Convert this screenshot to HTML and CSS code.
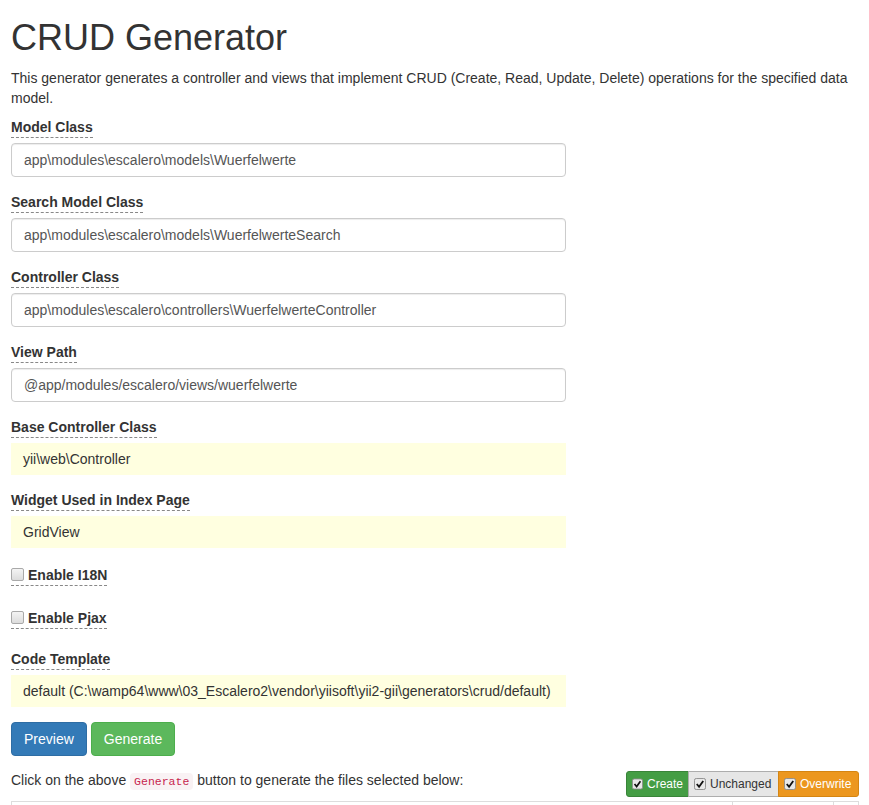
FILE: index.html
```html
<!DOCTYPE html>
<html>
<head>
<meta charset="utf-8">
<title>CRUD Generator</title>
<link rel="stylesheet" href="styles.css">
</head>
<body>
<div class="page">
  <h1 class="title">CRUD Generator</h1>
  <p class="lead-text">This generator generates a controller and views that implement CRUD (Create, Read, Update, Delete) operations for the specified data model.</p>

  <form class="gen-form">
    <div class="form-group">
      <label class="help">Model Class</label>
      <div class="field">app\modules\escalero\models\Wuerfelwerte</div>
    </div>
    <div class="form-group">
      <label class="help">Search Model Class</label>
      <div class="field">app\modules\escalero\models\WuerfelwerteSearch</div>
    </div>
    <div class="form-group">
      <label class="help">Controller Class</label>
      <div class="field">app\modules\escalero\controllers\WuerfelwerteController</div>
    </div>
    <div class="form-group">
      <label class="help">View Path</label>
      <div class="field">@app/modules/escalero/views/wuerfelwerte</div>
    </div>
    <div class="form-group">
      <label class="help">Base Controller Class</label>
      <div class="sticky">yii\web\Controller</div>
    </div>
    <div class="form-group">
      <label class="help">Widget Used in Index Page</label>
      <div class="sticky">GridView</div>
    </div>
    <div class="form-group">
      <div class="checkbox"><label class="help"><span class="cb"></span>Enable I18N</label></div>
    </div>
    <div class="form-group">
      <div class="checkbox"><label class="help"><span class="cb"></span>Enable Pjax</label></div>
    </div>
    <div class="form-group">
      <label class="help">Code Template</label>
      <div class="sticky">default (C:\wamp64\www\03_Escalero2\vendor\yiisoft\yii2-gii\generators\crud/default)</div>
    </div>
    <div class="buttons">
      <button type="button" class="btn btn-primary">Preview</button>
      <button type="button" class="btn btn-success">Generate</button>
    </div>
  </form>

  <div class="files-bar">
    <p class="files-note">Click on the above <code>Generate</code> button to generate the files selected below:</p>
    <div class="toggle-group">
      <span class="tg tg-create"><svg class="tick" viewBox="0 0 13 13"><rect x="0.5" y="0.5" width="12" height="12" rx="2" fill="#e8e8e8" stroke="#8a8a8a"/><path d="M3 6.5 L5.5 9.5 L10 3.2" fill="none" stroke="#111" stroke-width="2"/></svg>Create</span>
      <span class="tg tg-unchanged"><svg class="tick" viewBox="0 0 13 13"><rect x="0.5" y="0.5" width="12" height="12" rx="2" fill="#e8e8e8" stroke="#8a8a8a"/><path d="M3 6.5 L5.5 9.5 L10 3.2" fill="none" stroke="#111" stroke-width="2"/></svg>Unchanged</span>
      <span class="tg tg-overwrite"><svg class="tick" viewBox="0 0 13 13"><rect x="0.5" y="0.5" width="12" height="12" rx="2" fill="#e8e8e8" stroke="#8a8a8a"/><path d="M3 6.5 L5.5 9.5 L10 3.2" fill="none" stroke="#111" stroke-width="2"/></svg>Overwrite</span>
    </div>
  </div>

  <table class="files">
    <thead>
      <tr><th class="c-file">&nbsp;</th><th class="c-action">&nbsp;</th><th class="c-check">&nbsp;</th></tr>
    </thead>
  </table>
</div>
</body>
</html>
```

FILE: styles.css
```css
html, body {
  margin: 0;
  padding: 0;
  background: #fff;
}
body {
  font-family: "Liberation Sans", Arial, sans-serif;
  font-size: 14px;
  line-height: 20px;
  color: #333;
}
.page {
  padding: 0 10px 0 11px;
}
.title {
  font-size: 36px;
  font-weight: 500;
  line-height: 1.1;
  margin: 18px 0 10px;
  color: #333;
}
.lead-text {
  margin: 0 0 9px;
}
.gen-form {
  margin: 0;
}
.form-group {
  margin-bottom: 15px;
}
label.help {
  display: inline-block;
  font-weight: 700;
  border-bottom: 1px dashed #888;
  margin-bottom: 5px;
  line-height: 20px;
}
.field {
  width: 555px;
  box-sizing: border-box;
  height: 34px;
  padding: 6px 12px;
  border: 1px solid #ccc;
  border-radius: 4px;
  box-shadow: inset 0 1px 1px rgba(0,0,0,.075);
  color: #555;
  white-space: nowrap;
}
.sticky {
  width: 555px;
  box-sizing: border-box;
  padding: 6px 12px;
  background: #ffffe0;
  color: #333;
  white-space: pre;
}
.checkbox {
  padding: 2px 0 5px;
}
.checkbox label.help {
  margin-bottom: 0;
}
.cb {
  display: inline-block;
  width: 11px;
  height: 11px;
  border: 1px solid #a9a9a9;
  border-radius: 2px;
  background: linear-gradient(#f4f4f4, #dcdcdc);
  margin-right: 4px;
  vertical-align: -1px;
}
.buttons {
  display: flex;
  gap: 4px;
}
.btn {
  font-family: inherit;
  font-size: 14px;
  line-height: 20px;
  padding: 6px 12px;
  border: 1px solid transparent;
  border-radius: 4px;
  color: #fff;
  cursor: pointer;
}
.btn-primary {
  background: #337ab7;
  border-color: #2e6da4;
}
.btn-success {
  background: #5cb85c;
  border-color: #4cae4c;
}
.files-bar {
  display: flex;
  justify-content: space-between;
  align-items: flex-start;
  margin-top: 14px;
}
.files-note {
  margin: 0;
}
code {
  font-family: "Liberation Mono", "DejaVu Sans Mono", monospace;
  font-size: 11.5px;
  padding: 2px 4px;
  color: #c7254e;
  background: #f9f2f4;
  border-radius: 4px;
}
.toggle-group {
  display: flex;
  margin-top: 1px;
}
.tg {
  display: flex;
  align-items: center;
  height: 26px;
  box-sizing: border-box;
  padding: 0 5px;
  font-size: 12px;
  border: 1px solid transparent;
}
.tick {
  width: 12px;
  height: 12px;
  margin-right: 4px;
}
.tg-create {
  background: #449d44;
  border-color: #398439;
  color: #fff;
  border-radius: 3px 0 0 3px;
  width: 63px;
}
.tg-unchanged {
  background: #e6e6e6;
  border-color: #adadad;
  color: #333;
  margin-left: -1px;
  width: 91px;
}
.tg-overwrite {
  background: #ec971f;
  border-color: #d58512;
  color: #fff;
  border-radius: 0 3px 3px 0;
  margin-left: -1px;
  width: 81px;
}
.files {
  width: 848px;
  border-collapse: collapse;
  margin-top: 4px;
}
.files th {
  border: 1px solid #ddd;
  padding: 8px;
  text-align: left;
  height: 20px;
}
.c-action {
  width: 84px;
}
.c-check {
  width: 8px;
}
```
